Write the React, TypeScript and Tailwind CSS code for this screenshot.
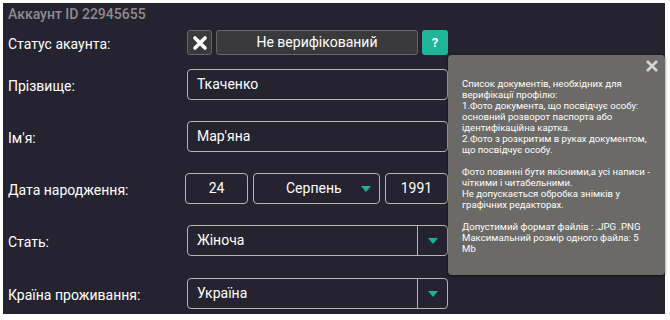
import React from 'react';

const font = { fontFamily: 'Roboto, "Noto Sans", sans-serif' };

const Caret: React.FC = () => (
  <span className="inline-block w-0 h-0 border-l-[5px] border-r-[5px] border-t-[6px] border-l-transparent border-r-transparent border-t-[#1bb394]" />
);

const Row: React.FC<{ label: string; className: string; children: React.ReactNode }> = ({ label, className, children }) => (
  <div className={`flex items-center ${className}`}>
    <div className="w-[177px] shrink-0 text-[14px] text-white pt-[3px]">{label}</div>
    {children}
  </div>
);

const Select: React.FC<{ value: string }> = ({ value }) => (
  <div className="ml-[2px] w-[261px] h-[31px] flex border border-[#b5b5b5] rounded-[4px]">
    <div className="flex-1 px-[9px] flex items-center text-[14px] text-white border-r border-[#b5b5b5]">{value}</div>
    <div className="w-[29px] flex items-center justify-center">
      <Caret />
    </div>
  </div>
);

const tooltip = `Список документів, необхідних для
верифікації профілю:
1.Фото документа, що посвідчує особу:
основний розворот паспорта або
ідентифікаційна картка.
2.Фото з розкритим в руках документом,
що посвідчує особу.

Фото повинні бути якісними,а усі написи -
чіткими і читабельними.
Не допускається обробка знімків у
графічних редакторах.

Допустимий формат файлів : .JPG .PNG
Максимальний розмір одного файла: 5
Mb`;

export default function App() {
  return (
    <div className="w-[670px] h-[320px] bg-white pt-[3px] pl-[3px]" style={font}>
      <div className="relative w-[662px] h-[311px] bg-[#24232f] pl-[5px] flex flex-col">
        <div className="h-[20px] shrink-0 text-[14px] font-medium text-[#8d8c93] leading-[20px] pt-[1px]">Аккаунт ID 22945655</div>

        <Row label="Статус акаунта:" className="h-[39px] shrink-0">
          <div className="ml-[2px] flex gap-[4px]">
            <div className="w-[25px] h-[25px] rounded-[3px] border border-[#666] bg-[#3a3a3c] flex items-center justify-center">
              <svg width="16" height="16" viewBox="0 0 16 16">
                <path d="M3 3 L13 13 M13 3 L3 13" stroke="#fff" strokeWidth="3.6" strokeLinecap="round" />
              </svg>
            </div>
            <div className="w-[202px] h-[25px] rounded-[3px] border border-[#666] bg-[#3a3a3c] flex items-center justify-center text-[14px] text-white">
              Не верифікований
            </div>
            <div className="w-[26px] h-[25px] rounded-[3px] bg-[#1fb597] flex items-center justify-center text-[13px] font-bold text-white">
              ?
            </div>
          </div>
        </Row>

        <Row label="Прізвище:" className="h-[45px] shrink-0">
          <div className="ml-[2px] w-[261px] h-[31px] border border-[#b5b5b5] rounded-[4px] px-[9px] flex items-center text-[14px] text-white">
            Ткаченко
          </div>
        </Row>

        <Row label="Ім'я:" className="h-[59px] shrink-0">
          <div className="ml-[2px] w-[261px] h-[31px] border border-[#b5b5b5] rounded-[4px] px-[9px] flex items-center text-[14px] text-white">
            Мар'яна
          </div>
        </Row>

        <Row label="Дата народження:" className="h-[45px] shrink-0">
          <div className="flex gap-[5px]">
            <div className="w-[63px] h-[31px] border border-[#b5b5b5] rounded-[4px] flex items-center justify-center text-[14px] text-white">24</div>
            <div className="w-[127px] h-[31px] border border-[#b5b5b5] rounded-[4px] flex items-center text-[14px] text-white pl-[32px]">
              <span className="flex-1">Серпень</span>
              <span className="mr-[8px] flex"><Caret /></span>
            </div>
            <div className="w-[63px] h-[31px] border border-[#b5b5b5] rounded-[4px] flex items-center justify-center text-[14px] text-white">1991</div>
          </div>
        </Row>

        <Row label="Стать:" className="h-[59px] shrink-0">
          <Select value="Жіноча" />
        </Row>

        <Row label="Країна проживання:" className="h-[47px] shrink-0">
          <Select value="Україна" />
        </Row>

        <div className="absolute left-[445px] top-[52px] w-[217px] h-[220px] bg-[#6b6a66] rounded-[4px] shadow-[0_1px_3px_rgba(0,0,0,0.6)] pl-[14px] pt-[23px]">
          <div className="absolute right-[6px] top-[4px]">
            <svg width="14" height="14" viewBox="0 0 14 14">
              <path d="M2 2 L12 12 M12 2 L2 12" stroke="#d6d6d6" strokeWidth="2.6" />
            </svg>
          </div>
          <div className="text-[9.6px] leading-[11px] text-white whitespace-pre">{tooltip}</div>
        </div>
      </div>
    </div>
  );
}
